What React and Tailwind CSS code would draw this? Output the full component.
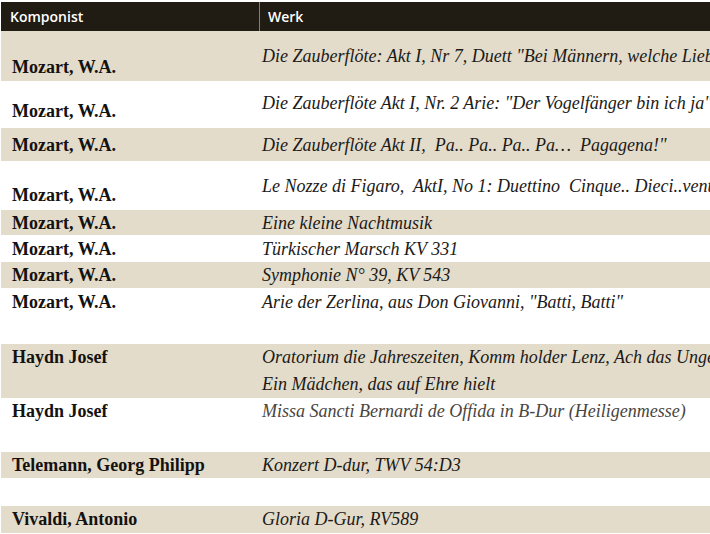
import React from 'react';

// rows of the repertoire list; heights and paddings follow the source table
const rows = [
  { h: 50, cPt: 23, wPt: 12, composer: 'Mozart, W.A.', works: ['Die Zauberflöte: Akt I, Nr 7, Duett "Bei Männern, welche Liebe fühlen"'] },
  { h: 47, cPt: 17, wPt: 9, composer: 'Mozart, W.A.', works: ['Die Zauberflöte Akt I, Nr. 2 Arie: "Der Vogelfänger bin ich ja"'] },
  { h: 33, cPt: 4, wPt: 4, composer: 'Mozart, W.A.', works: ['Die Zauberflöte Akt II,  Pa.. Pa.. Pa.. Pa…  Pagagena!"'] },
  { h: 49, cPt: 21, wPt: 12, composer: 'Mozart, W.A.', works: ['Le Nozze di Figaro,  AktI, No 1: Duettino  Cinque.. Dieci..venti'] },
  { h: 25, cPt: 0, wPt: 0, composer: 'Mozart, W.A.', works: ['Eine kleine Nachtmusik'] },
  { h: 27, cPt: 1, wPt: 1, composer: 'Mozart, W.A.', works: ['Türkischer Marsch KV 331'] },
  { h: 26, cPt: 0, wPt: 0, composer: 'Mozart, W.A.', works: ['Symphonie N° 39, KV 543'] },
  { h: 56, cPt: 1, wPt: 1, composer: 'Mozart, W.A.', works: ['Arie der Zerlina, aus Don Giovanni, "Batti, Batti"'] },
  { h: 54, cPt: 0, wPt: 0, composer: 'Haydn Josef', works: ['Oratorium die Jahreszeiten, Komm holder Lenz, Ach das Ungewitter', 'Ein Mädchen, das auf Ehre hielt'] },
  { h: 54, cPt: 0, wPt: 0, composer: 'Haydn Josef', works: ['Missa Sancti Bernardi de Offida in B-Dur (Heiligenmesse)'], muted: true },
  { h: 26, cPt: 0, wPt: 0, composer: 'Telemann, Georg Philipp', works: ['Konzert D-dur, TWV 54:D3'] },
  { h: 28, cPt: 0, wPt: 0, composer: '', works: [] },
  { h: 27, cPt: 0, wPt: 0, composer: 'Vivaldi, Antonio', works: ['Gloria D-Gur, RV589'] },
];

const serif = { fontFamily: '"Liberation Serif", "Times New Roman", serif' };

const App = () => {
  return (
    <div className="w-[710px] h-[534px] overflow-hidden bg-white pt-[2px] pl-px">
      <div className="w-[720px]">
        {/* header */}
        <div
          className="flex h-[29px] bg-[#201b13] text-white text-[14px] font-semibold"
          style={{ fontFamily: '"Open Sans", "Noto Sans", sans-serif' }}
        >
          <div className="w-[258px] pl-[9px] pt-[4px]">Komponist</div>
          <div className="flex-1 border-l border-[#a86c6c] pl-[8px] pt-[4px]">Werk</div>
        </div>

        {rows.map((row, i) => (
          <div
            key={i}
            className={`flex text-[18px] leading-[26px] ${i % 2 === 0 ? 'bg-[#e4dcca]' : 'bg-white'}`}
            style={{ height: row.h, ...serif }}
          >
            <div className="w-[258px] shrink-0 pl-[11px] font-bold text-[#141210]" style={{ paddingTop: row.cPt }}>
              {row.composer}
            </div>
            <div
              className={`flex-1 pl-[3px] italic whitespace-pre ${row.muted ? 'text-[#4a4540]' : 'text-[#1c1a17]'}`}
              style={{ paddingTop: row.wPt }}
            >
              {row.works.map((w, j) => (
                <div key={j} className="leading-[27px]">{w}</div>
              ))}
            </div>
          </div>
        ))}
      </div>
    </div>
  );
};

export default App;
